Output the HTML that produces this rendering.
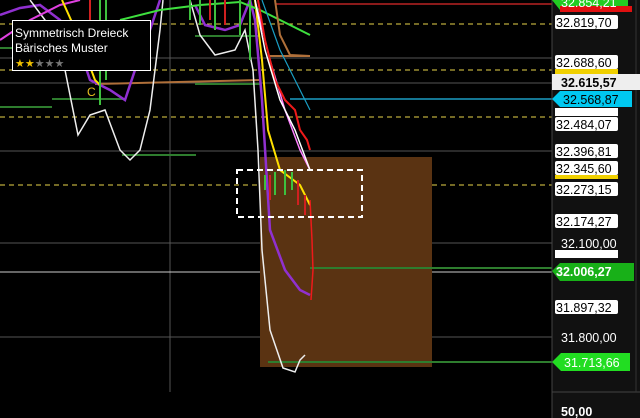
<!DOCTYPE html>
<html><head><style>
html,body{margin:0;padding:0;background:#000;width:640px;height:418px;overflow:hidden}
svg{display:block}
text{font-family:"Liberation Sans",sans-serif}
</style></head><body>
<svg width="640" height="418" viewBox="0 0 640 418">
<rect width="640" height="418" fill="#000"/>
<!-- grid lines -->
<g stroke="#555" stroke-width="1">
<line x1="0" y1="83" x2="552" y2="83"/>
<line x1="0" y1="58" x2="552" y2="58"/>
<line x1="0" y1="151" x2="552" y2="151"/>
<line x1="0" y1="243" x2="552" y2="243"/>
<line x1="0" y1="337" x2="552" y2="337"/>
<line x1="170" y1="0" x2="170" y2="392"/>
</g>
<line x1="0" y1="272" x2="552" y2="272" stroke="#ccc" stroke-width="1"/>
<g stroke="#e8d44a" stroke-width="1" stroke-dasharray="5,4">
<line x1="0" y1="24" x2="552" y2="24"/>
<line x1="0" y1="70" x2="552" y2="70"/>
<line x1="0" y1="117" x2="552" y2="117"/>
<line x1="0" y1="185" x2="552" y2="185"/>
</g>
<!-- brown box -->
<rect x="260" y="157" width="172" height="210" fill="#5a3312"/>
<!-- green horizontals -->
<g stroke="#2e7d2e" stroke-width="2">
<line x1="0" y1="48" x2="150" y2="48"/>
<line x1="0" y1="107" x2="52" y2="107"/>
<line x1="52" y1="99" x2="124" y2="99"/>
<line x1="122" y1="155" x2="196" y2="155"/>
<line x1="195" y1="36" x2="260" y2="36"/>
<line x1="195" y1="84" x2="260" y2="84"/>
<line x1="268" y1="362" x2="552" y2="362"/>
<line x1="310" y1="268" x2="552" y2="268"/>
</g>
<line x1="290" y1="99" x2="552" y2="99" stroke="#1a9ec4" stroke-width="1.5"/>
<line x1="95" y1="84" x2="260" y2="80" stroke="#b0703a" stroke-width="2"/>
<line x1="270" y1="56" x2="310" y2="56" stroke="#b0703a" stroke-width="2"/>
<line x1="275" y1="4" x2="552" y2="4" stroke="#8b1a1a" stroke-width="2"/>
<!-- curves -->
<polyline fill="none" stroke="#9030d0" stroke-width="2.5" points="0,15 20,8 40,5 60,20 80,50 90,80 110,90 125,100 135,70 150,30 160,0"/>
<polyline fill="none" stroke="#9030d0" stroke-width="2.5" points="195,5 205,25 225,30 240,25 250,0 255,20 262,100 270,230 285,270 300,290 310,295"/>
<polyline fill="none" stroke="#eee" stroke-width="1.5" points="30,0 45,20 65,70 78,135 90,115 105,110 120,150 130,160 140,150 150,110 160,30 163,0"/>
<polyline fill="none" stroke="#eee" stroke-width="1.5" points="190,0 200,35 215,55 235,50 245,30 253,70 258,150 262,250 270,330 283,368 295,372 300,360 305,355"/>
<polyline fill="none" stroke="#e040e0" stroke-width="2" points="0,40 30,20 60,5 80,0"/>
<polyline fill="none" stroke="#ff80ff" stroke-width="1.5" points="255,0 270,60 285,110 300,150 310,170"/>
<polyline fill="none" stroke="#ffe000" stroke-width="2" points="62,0 80,40 95,80 100,85"/>
<polyline fill="none" stroke="#ffe000" stroke-width="2" points="255,0 262,60 268,130 280,170 300,185 310,205"/>
<polyline fill="none" stroke="#3ee03e" stroke-width="2" points="120,20 160,10 200,5 240,2 260,10 280,20 310,35"/>
<polyline fill="none" stroke="#ee1a1a" stroke-width="2" points="258,0 265,40 275,80 285,100 295,110 300,130 307,140 310,150"/>
<polyline fill="none" stroke="#fff" stroke-width="1.5" points="255,0 265,50 280,100 295,130 310,170"/>
<polyline fill="none" stroke="#1a9ec4" stroke-width="1.2" points="262,0 280,50 300,90 310,110"/>
<polyline fill="none" stroke="#b0703a" stroke-width="2" points="275,0 280,35 290,55 310,56"/>
<polyline fill="none" stroke="#ee1a1a" stroke-width="1.5" points="310,200 312,240 313,270 311,300"/>
<!-- candles -->
<g stroke="#3ec03e" stroke-width="2">
<line x1="100" y1="0" x2="100" y2="105"/><line x1="106" y1="0" x2="106" y2="80"/>
<line x1="190" y1="0" x2="190" y2="20"/><line x1="200" y1="0" x2="200" y2="25"/><line x1="215" y1="0" x2="215" y2="30"/>
<line x1="240" y1="0" x2="240" y2="35"/><line x1="250" y1="0" x2="250" y2="60"/>
<line x1="265" y1="175" x2="265" y2="190"/><line x1="275" y1="172" x2="275" y2="195"/><line x1="285" y1="170" x2="285" y2="195"/><line x1="292" y1="172" x2="292" y2="190"/>
</g>
<g stroke="#d02020" stroke-width="2">
<line x1="90" y1="0" x2="90" y2="70"/><line x1="210" y1="0" x2="210" y2="20"/><line x1="225" y1="0" x2="225" y2="25"/>
<line x1="270" y1="175" x2="270" y2="200"/><line x1="298" y1="180" x2="298" y2="205"/><line x1="305" y1="195" x2="305" y2="215"/>
</g>
<text x="87" y="96" fill="#e8c020" font-size="12">C</text>
<!-- dashed selection -->
<rect x="237" y="170" width="125" height="47" fill="none" stroke="#fff" stroke-width="2" stroke-dasharray="6,4"/>
<!-- info box -->
<rect x="12.5" y="20.5" width="138" height="50" fill="#000" stroke="#fff" stroke-width="1"/>
<text x="15" y="37" fill="#fff" font-size="12">Symmetrisch Dreieck</text>
<text x="15" y="52" fill="#fff" font-size="12">Bärisches Muster</text>
<text x="15" y="67" fill="#f0c000" font-size="11">★★<tspan fill="#777">★★★</tspan></text>
<!-- axis -->
<rect x="552" y="0" width="88" height="418" fill="#111"/>
<line x1="552" y1="0" x2="552" y2="418" stroke="#444"/>
<line x1="552" y1="392" x2="640" y2="392" stroke="#444"/>
<line x1="636" y1="0" x2="636" y2="392" stroke="#333"/>
<g font-size="12.5">
<polygon points="552,0 628,0 628,10 560,10" fill="#22cc22"/>
<rect x="560" y="6" width="72" height="6" fill="#e01010"/>
<text x="561" y="7" fill="#fff">32.854,21</text>
<rect x="555" y="15" width="63" height="14" fill="#fff" rx="2"/><text x="556" y="27" fill="#000">32.819,70</text>
<rect x="555" y="55" width="63" height="14" fill="#fff" rx="2"/><text x="556" y="67" fill="#000">32.688,60</text>
<rect x="555" y="69" width="63" height="5" fill="#f0d000"/>
<rect x="552" y="74" width="88" height="16" fill="#eee"/><text x="561" y="87" fill="#000" font-weight="bold">32.615,57</text>
<polygon points="552,99 560,91 632,91 632,107 560,107" fill="#00c8f0"/><text x="563" y="104" fill="#000">32.568,87</text>
<rect x="555" y="108" width="63" height="8" fill="#fff"/>
<rect x="555" y="117" width="63" height="14" fill="#fff" rx="2"/><text x="556" y="129" fill="#000">32.484,07</text>
<rect x="555" y="144" width="63" height="14" fill="#fff" rx="2"/><text x="556" y="156" fill="#000">32.396,81</text>
<rect x="555" y="161" width="63" height="14" fill="#fff" rx="2"/><text x="556" y="173" fill="#000">32.345,60</text>
<rect x="555" y="175" width="63" height="4" fill="#f0d000"/>
<rect x="555" y="182" width="63" height="14" fill="#fff" rx="2"/><text x="556" y="194" fill="#000">32.273,15</text>
<rect x="555" y="214" width="63" height="14" fill="#fff" rx="2"/><text x="556" y="226" fill="#000">32.174,27</text>
<text x="561" y="248" fill="#fff">32.100,00</text>
<rect x="555" y="250" width="63" height="8" fill="#fff"/>
<polygon points="552,271 560,263 634,263 634,281 560,281" fill="#18b018"/><text x="556" y="276" fill="#fff" font-weight="bold">32.006,27</text>
<rect x="555" y="300" width="63" height="14" fill="#fff" rx="2"/><text x="556" y="312" fill="#000">31.897,32</text>
<text x="561" y="342" fill="#fff">31.800,00</text>
<polygon points="552,362 561,353 630,353 630,371 561,371" fill="#22dd22"/><text x="564" y="367" fill="#fff">31.713,66</text>
<text x="561" y="416" fill="#fff" font-weight="bold">50,00</text>
</g>
</svg>
</body></html>
